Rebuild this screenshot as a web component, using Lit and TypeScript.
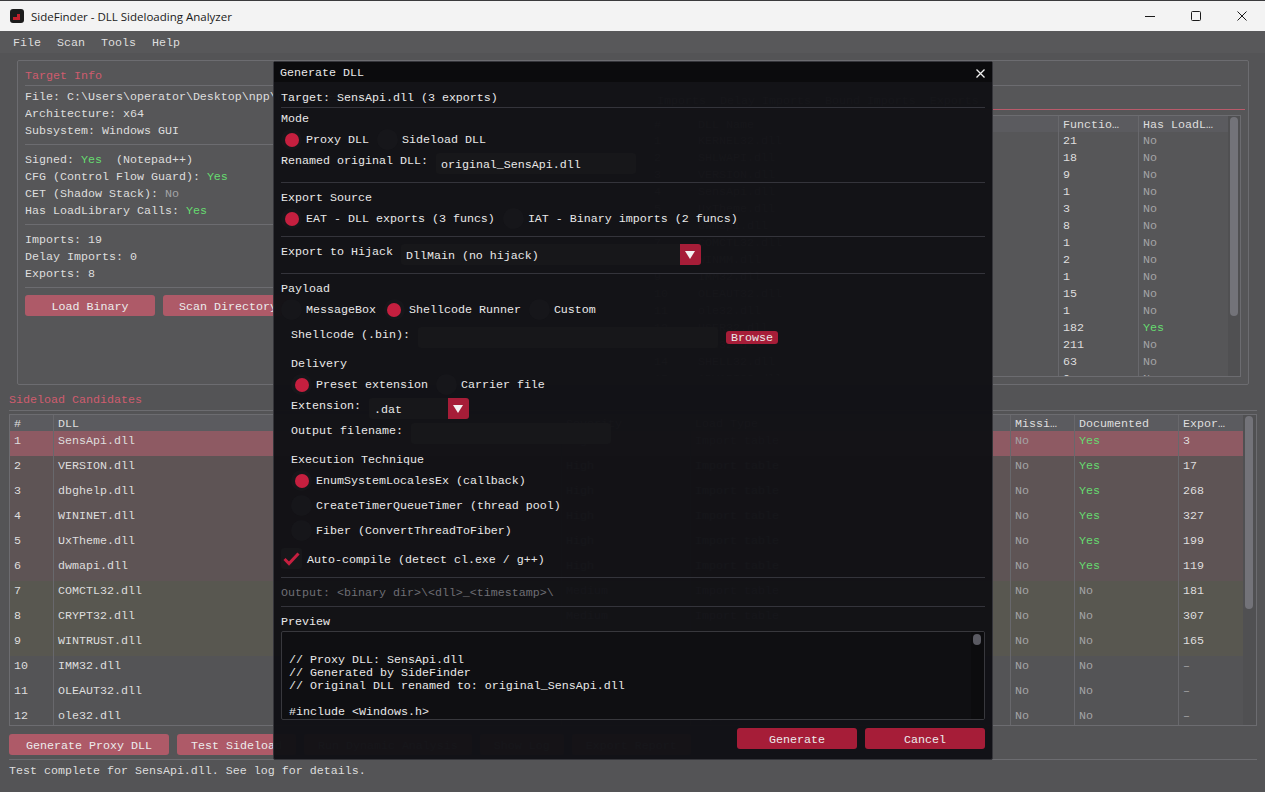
import { LitElement, css, html } from "lit";
import { customElement } from "lit/decorators.js";

const IMPORT_ROWS: [string, string, string][] = [
  ["KERNEL32.dll", "21", "No"], ["SHLWAPI.dll", "18", "No"], ["VERSION.dll", "9", "No"],
  ["SensApi.dll", "1", "No"], ["UxTheme.dll", "3", "No"], ["dwmapi.dll", "8", "No"],
  ["COMCTL32.dll", "1", "No"], ["WINMM.dll", "2", "No"], ["IMM32.dll", "1", "No"],
  ["OLEAUT32.dll", "15", "No"], ["ole32.dll", "1", "No"], ["USER32.dll", "182", "Yes"],
  ["GDI32.dll", "211", "No"], ["SHELL32.dll", "63", "No"], ["ADVAPI32.dll", "9", "No"],
];

type Tone = "sel" | "red" | "olive" | "";
const CANDIDATES: [string, string, string, Tone][] = [
  ["SensApi.dll", "Yes", "3", "sel"], ["VERSION.dll", "Yes", "17", "red"],
  ["dbghelp.dll", "Yes", "268", "red"], ["WININET.dll", "Yes", "327", "red"],
  ["UxTheme.dll", "Yes", "199", "red"], ["dwmapi.dll", "Yes", "119", "red"],
  ["COMCTL32.dll", "No", "181", "olive"], ["CRYPT32.dll", "No", "307", "olive"],
  ["WINTRUST.dll", "No", "165", "olive"], ["IMM32.dll", "No", "–", ""],
  ["OLEAUT32.dll", "No", "–", ""], ["ole32.dll", "No", "–", ""],
];

const PREVIEW = [
  "",
  "// Proxy DLL: SensApi.dll",
  "// Generated by SideFinder",
  "// Original DLL renamed to: original_SensApi.dll",
  "",
  "#include <Windows.h>",
];

@customElement("app-root")
export class AppRoot extends LitElement {
  static styles = css`
    :host {
      display: block;
      width: 1265px;
      height: 792px;
      overflow: hidden;
      position: relative;
      background: #545456;
      color: #dedede;
      font-family: "Liberation Mono", monospace;
      font-size: 11.67px;
      line-height: 15px;
      white-space: nowrap;
    }
    .titlebar {
      height: 31px;
      box-sizing: border-box;
      border-top: 1px solid #3a3a3c;
      background: #f3f3f3;
      color: #1a1a1a;
      display: flex;
      align-items: center;
      padding-left: 10px;
      font-family: "Open Sans", sans-serif;
      font-size: 11.5px;
    }
    .app-icon { width: 14px; height: 14px; margin-right: 7px; }
    .title { flex: 1; }
    .win-btn { width: 46px; height: 30px; display: flex; align-items: center; justify-content: center; }
    .menubar {
      height: 22px;
      box-sizing: border-box;
      padding: 2px 0 0 5px;
      display: flex;
      align-items: center;
      background: #58585a;
    }
    .menubar span { padding: 0 8px; }
    main { padding: 7px 8px 0 9px; display: flex; flex-direction: column; }
    .panel {
      margin: 0 8px;
      height: 325px;
      box-sizing: border-box;
      border: 1px solid #6c6c70;
      border-radius: 2px;
      padding: 8px 7px 0;
      background: #565658;
    }
    .heading { color: #cf5c6e; }
    .sep { height: 1px; background: #6c6c70; }
    .columns { display: flex; gap: 8px; }
    .left { width: 616px; flex: none; display: flex; flex-direction: column; overflow: hidden; }
    .right { flex: 1; min-width: 0; margin-right: -4px; padding-top: 8px; }
    .left .sep { margin: 7px 0 8px; }
    .left .line + .line { margin-top: 4px; }
    .left .btn-row { margin-top: -1px; }
    .line { height: 13px; white-space: pre; }
    .yes { color: #66dc70; }
    .no { color: #a4a4a6; }
    .btn-row { display: flex; gap: 8px; }
    .btn {
      height: 21px;
      box-sizing: border-box;
      display: flex;
      align-items: center;
      justify-content: center;
      border-radius: 3px;
      background: #ae5a68;
      color: #ececec;
      padding: 3px 14px 0;
    }
    .w130 { width: 130px; }
    .w160 { width: 160px; }
    .tabs { display: flex; gap: 14px; padding-left: 8px; height: 15px; border-bottom: 1px solid #b95a6a; }
    .table { border: 1px solid #6c6c70; position: relative; overflow: hidden; }
    .imports { height: 260px; margin: 5px 4px 0 0; }
    .cands { height: 310px; margin-top: 3px; }
    .row { display: grid; }
    .imports .row { grid-template-columns: 43px 365px 80px 91px; height: 17px; }
    .cands .row { grid-template-columns: 43px 508px 129px 320px 64px 104px 65px; height: 25px; }
    .row > div { padding: 2px 0 0 4px; border-left: 1px solid #68686c; overflow: hidden; }
    .row > div:first-child { border-left: none; }
    .head { background: #5b5b5f; }
    .imports .row.head { height: 16px; }
    .cands .row.head { height: 16px; }
    .cands .row:not(.head) > div { padding-top: 3px; }
    .sel { background: #8e5a63; }
    .red { background: #5e5455; }
    .olive { background: #585750; }
    .track { position: absolute; top: 0; right: 0; bottom: 0; background: #505052; }
    .thumb { position: absolute; left: 2px; width: 8px; top: 1px; border-radius: 4px; background: #737379; }
    .imports .track { width: 12px; }
    .imports .thumb { height: 199px; }
    .cands .track { width: 13px; }
    .cands .thumb { height: 193px; }
    .mt3 { margin-top: 3px; }
    .mt4 { margin-top: 4px; }
    .mt7 { margin-top: 7px; }
    .mt8 { margin-top: 8px; }
    .mt9 { margin-top: 9px; }
    .modal {
      position: absolute;
      left: 273px;
      top: 61px;
      width: 720px;
      height: 699px;
      box-sizing: border-box;
      background: rgba(17, 17, 21, 0.98);
      border: 1px solid #35353a;
      border-radius: 2px;
      color: #e9e9e9;
    }
    .modal-title {
      height: 20px;
      box-sizing: border-box;
      margin: 0 0 9px;
      display: flex;
      align-items: center;
      justify-content: space-between;
      padding: 2px 7px 0 6px;
      background: #0b0b0d;
    }
    .modal-body { padding: 0 7px; display: flex; flex-direction: column; }
    .modal .sep { background: #34343b; }
    .radios { display: flex; gap: 8px; height: 21px; }
    .radio { display: flex; align-items: center; gap: 4px; }
    .radio-label { padding-top: 2px; }
    .dot {
      width: 21px;
      height: 21px;
      border-radius: 50%;
      background: #16161a;
      display: flex;
      align-items: center;
      justify-content: center;
    }
    .dot.on::after {
      content: "";
      width: 14px;
      height: 14px;
      border-radius: 50%;
      background: #c51f3f;
    }
    .field { display: flex; gap: 8px; height: 21px; }
    .field > .label { margin-top: 1px; }
    .input {
      height: 21px;
      box-sizing: border-box;
      padding: 5px 5px 0;
      background: #17171a;
      border-radius: 3px;
    }
    .w200 { width: 200px; }
    .w300 { width: 300px; }
    .w100 { width: 100px; }
    .combo { position: relative; }
    .arrow {
      position: absolute;
      right: 0;
      top: 0;
      width: 21px;
      height: 21px;
      border-radius: 0 3px 3px 0;
      background: #a61d38;
      display: flex;
      align-items: center;
      justify-content: center;
    }
    .browse {
      width: 52px;
      height: 13px;
      margin-top: 4px;
      border-radius: 3px;
      background: #a61d38;
      text-align: center;
      line-height: 14px;
    }
    .indent { margin-left: 10px; display: flex; flex-direction: column; }
    .check { display: flex; gap: 5px; align-items: center; height: 21px; }
    .check-label { padding-top: 4px; }
    .box {
      width: 21px;
      height: 21px;
      background: #17171a;
      border-radius: 3px;
      display: flex;
      align-items: center;
      justify-content: center;
    }
    .dim { color: #6e6e74; }
    .preview {
      height: 89px;
      box-sizing: border-box;
      border: 1px solid #38383d;
      border-radius: 2px;
      background: #0f0f12;
      padding: 8px 0 0 7px;
      overflow: hidden;
      position: relative;
    }
    .preview .code { height: 13px; }
    .pv-track { position: absolute; right: 0; top: 0; bottom: 0; width: 13px; background: #0c0c0e; }
    .pv-thumb { position: absolute; left: 2px; top: 2px; width: 8px; height: 11px; border-radius: 4px; background: #5a5a62; }
    .actions { display: flex; justify-content: flex-end; gap: 8px; }
    .actions .btn { width: 120px; background: #a61d38; }
  `;

  private radio(on: boolean, label: string) {
    return html`<div class="radio"><span class="dot ${on ? "on" : ""}"></span><span class="radio-label">${label}</span></div>`;
  }

  private arrow() {
    return html`<span class="arrow"><svg width="10" height="8" viewBox="0 0 10 8"><path d="M0 0H10L5 8Z" fill="#f2f2f2" /></svg></span>`;
  }

  private renderLeft() {
    return html`
      <div class="left">
        <div class="line mt4">File: C:\\Users\\operator\\Desktop\\npp\\notepad++.exe</div>
        <div class="line">Architecture: x64</div>
        <div class="line">Subsystem: Windows GUI</div>
        <div class="sep"></div>
        <div class="line">Signed: <span class="yes">Yes</span>  (Notepad++)</div>
        <div class="line">CFG (Control Flow Guard): <span class="yes">Yes</span></div>
        <div class="line">CET (Shadow Stack): <span class="no">No</span></div>
        <div class="line">Has LoadLibrary Calls: <span class="yes">Yes</span></div>
        <div class="sep"></div>
        <div class="line">Imports: 19</div>
        <div class="line">Delay Imports: 0</div>
        <div class="line">Exports: 8</div>
        <div class="sep"></div>
        <div class="btn-row">
          <div class="btn w130">Load Binary</div>
          <div class="btn w130">Scan Directory</div>
        </div>
      </div>
    `;
  }

  private renderImports() {
    return html`
      <div class="right">
        <div class="tabs"><span>Imports</span><span>Delay Imports</span><span>Bound Imports</span><span>Exports</span></div>
        <div class="table imports">
          <div class="row head"><div>#</div><div>DLL Name</div><div>Functio…</div><div>Has LoadL…</div></div>
          ${IMPORT_ROWS.map(
            ([name, count, load], i) => html`
              <div class="row">
                <div>${i + 1}</div><div>${name}</div><div>${count}</div>
                <div class=${load === "Yes" ? "yes" : "no"}>${load}</div>
              </div>
            `,
          )}
          <div class="track"><div class="thumb"></div></div>
        </div>
      </div>
    `;
  }

  private renderCandidates() {
    return html`
      <div class="table cands">
        <div class="row head">
          <div>#</div><div>DLL</div><div>Severity</div><div>Load Type</div>
          <div>Missi…</div><div>Documented</div><div>Expor…</div>
        </div>
        ${CANDIDATES.map(
          ([name, doc, exports, tone], i) => html`
            <div class="row ${tone}">
              <div>${i + 1}</div><div>${name}</div>
              <div>${tone === "olive" ? "Medium" : tone ? "High" : "Low"}</div>
              <div>Import table</div>
              <div class="no">No</div>
              <div class=${doc === "Yes" ? "yes" : "no"}>${doc}</div>
              <div class=${exports === "–" ? "no" : ""}>${exports}</div>
            </div>
          `,
        )}
        <div class="track"><div class="thumb"></div></div>
      </div>
    `;
  }

  private renderModal() {
    return html`
      <div class="modal">
        <div class="modal-title">
          <span>Generate DLL</span>
          <svg width="9" height="9" viewBox="0 0 9 9"><path d="M.5 .5L8.5 8.5M8.5 .5L.5 8.5" stroke="#f0f0f0" stroke-width="1.3" /></svg>
        </div>
        <div class="modal-body">
          <div class="line">Target: SensApi.dll (3 exports)</div>
          <div class="sep mt3"></div>
          <div class="line mt4">Mode</div>
          <div class="radios mt4">${this.radio(true, "Proxy DLL")}${this.radio(false, "Sideload DLL")}</div>
          <div class="field mt3">
            <span class="label">Renamed original DLL:</span>
            <div class="input w200">original_SensApi.dll</div>
          </div>
          <div class="sep mt8"></div>
          <div class="line mt8">Export Source</div>
          <div class="radios mt4">
            ${this.radio(true, "EAT - DLL exports (3 funcs)")}${this.radio(false, "IAT - Binary imports (2 funcs)")}
          </div>
          <div class="sep mt7"></div>
          <div class="field mt7">
            <span class="label">Export to Hijack</span>
            <div class="input combo w300">DllMain (no hijack)${this.arrow()}</div>
          </div>
          <div class="sep mt8"></div>
          <div class="line mt8">Payload</div>
          <div class="radios mt4">
            ${this.radio(false, "MessageBox")}${this.radio(true, "Shellcode Runner")}${this.radio(false, "Custom")}
          </div>
          <div class="indent">
            <div class="field mt7">
              <span class="label">Shellcode (.bin):</span>
              <div class="input w300"></div>
              <div class="browse">Browse</div>
            </div>
            <div class="line mt9">Delivery</div>
            <div class="radios mt4">${this.radio(true, "Preset extension")}${this.radio(false, "Carrier file")}</div>
            <div class="field mt3">
              <span class="label">Extension:</span>
              <div class="input combo w100">.dat${this.arrow()}</div>
            </div>
            <div class="field mt4">
              <span class="label">Output filename:</span>
              <div class="input w200"></div>
            </div>
            <div class="line mt9">Execution Technique</div>
            <div class="radios mt4">${this.radio(true, "EnumSystemLocalesEx (callback)")}</div>
            <div class="radios mt4">${this.radio(false, "CreateTimerQueueTimer (thread pool)")}</div>
            <div class="radios mt4">${this.radio(false, "Fiber (ConvertThreadToFiber)")}</div>
          </div>
          <div class="check mt7">
            <span class="box"><svg width="17" height="14" viewBox="0 0 17 14"><path d="M1.5 7L6 11.5L15.5 1.5" fill="none" stroke="#c51f3f" stroke-width="3" /></svg></span>
            <span class="check-label">Auto-compile (detect cl.exe / g++)</span>
          </div>
          <div class="sep mt8"></div>
          <div class="line mt8 dim">Output: &lt;binary dir&gt;\\&lt;dll&gt;_&lt;timestamp&gt;\\</div>
          <div class="sep mt7"></div>
          <div class="line mt8">Preview</div>
          <div class="preview mt3">
            ${PREVIEW.map((text) => html`<div class="code">${text}</div>`)}
            <div class="pv-track"><div class="pv-thumb"></div></div>
          </div>
          <div class="actions mt8">
            <div class="btn">Generate</div>
            <div class="btn">Cancel</div>
          </div>
        </div>
      </div>
    `;
  }

  render() {
    return html`
      <div class="titlebar">
        <svg class="app-icon" viewBox="0 0 14 14">
          <rect width="14" height="14" rx="3" fill="#1c1c1c" />
          <path d="M3 8H7V5H10V11H3Z" fill="#c4202c" />
        </svg>
        <span class="title">SideFinder - DLL Sideloading Analyzer</span>
        <div class="win-btn">
          <svg width="10" height="10" viewBox="0 0 10 10"><path d="M0 5.5H10" stroke="#1a1a1a" /></svg>
        </div>
        <div class="win-btn">
          <svg width="10" height="10" viewBox="0 0 10 10"><rect x=".5" y=".5" width="9" height="9" rx="1" fill="none" stroke="#1a1a1a" /></svg>
        </div>
        <div class="win-btn">
          <svg width="10" height="10" viewBox="0 0 10 10"><path d="M.5 .5L9.5 9.5M9.5 .5L.5 9.5" stroke="#1a1a1a" /></svg>
        </div>
      </div>
      <div class="menubar"><span>File</span><span>Scan</span><span>Tools</span><span>Help</span></div>
      <main>
        <section class="panel">
          <div class="heading line">Target Info</div>
          <div class="sep mt3"></div>
          <div class="columns">${this.renderLeft()}${this.renderImports()}</div>
        </section>
        <div class="heading line mt8">Sideload Candidates</div>
        <div class="sep mt4"></div>
        ${this.renderCandidates()}
        <div class="btn-row mt8">
          <div class="btn w160">Generate Proxy DLL</div>
          <div class="btn">Test Sideload</div>
          <div class="btn">Run Dynamic Analysis</div>
          <div class="btn">Show Log</div>
          <div class="btn">Export Report</div>
        </div>
        <div class="sep mt4"></div>
        <div class="line mt4">Test complete for SensApi.dll. See log for details.</div>
      </main>
      ${this.renderModal()}
    `;
  }
}
